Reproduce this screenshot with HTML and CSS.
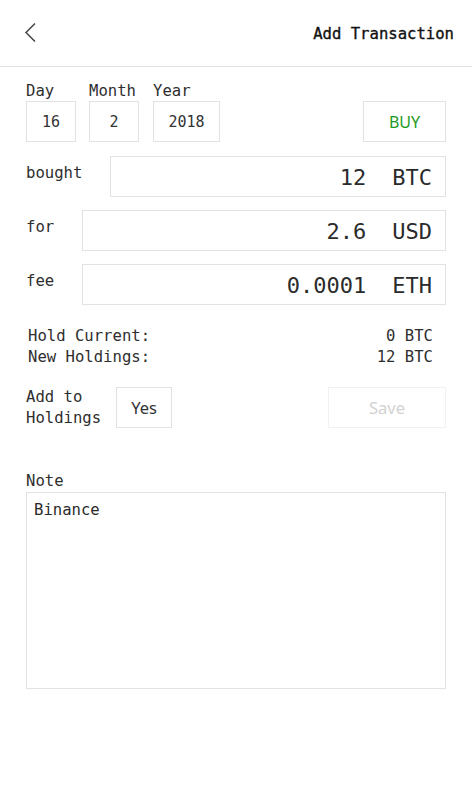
FILE: index.html
```html
<!DOCTYPE html>
<html>
<head>
<meta charset="utf-8">
<link rel="stylesheet" href="styles.css">
</head>
<body>
<div class="app">
  <header class="topbar">
    <svg class="back" width="14" height="22" viewBox="0 0 14 22"><path d="M11 1.5 L2 10.5 L11 19.5" fill="none" stroke="#444" stroke-width="1.5"/></svg>
    <div class="title">Add Transaction</div>
  </header>
  <main class="form">
    <div class="date-row">
      <div class="date-col">
        <div class="lbl">Day</div>
        <div class="box box-day">16</div>
      </div>
      <div class="date-col">
        <div class="lbl">Month</div>
        <div class="box box-day">2</div>
      </div>
      <div class="date-col year-col">
        <div class="lbl">Year</div>
        <div class="box box-year">2018</div>
      </div>
      <div class="box buy">BUY</div>
    </div>

    <div class="field first">
      <div class="flbl">bought</div>
      <div class="finput"><span class="val">12</span><span class="unit">BTC</span></div>
    </div>
    <div class="field">
      <div class="flbl">for</div>
      <div class="finput"><span class="val">2.6</span><span class="unit">USD</span></div>
    </div>
    <div class="field">
      <div class="flbl">fee</div>
      <div class="finput"><span class="val">0.0001</span><span class="unit">ETH</span></div>
    </div>

    <div class="summary">
      <div class="sline"><span>Hold Current:</span><span>0 BTC</span></div>
      <div class="sline"><span>New Holdings:</span><span>12 BTC</span></div>
    </div>

    <div class="add-row">
      <div class="add-lbl">Add to<br>Holdings</div>
      <div class="box yes">Yes</div>
      <div class="box save">Save</div>
    </div>

    <div class="lbl note-lbl">Note</div>
    <div class="note">Binance</div>
  </main>
</div>
</body>
</html>
```

FILE: styles.css
```css
* { box-sizing: border-box; }
html, body { margin: 0; padding: 0; background: #fff; }
body {
  font-family: "DejaVu Sans Mono", "Liberation Mono", monospace;
  color: #2a2a2a;
  width: 472px;
}
.topbar {
  height: 67px;
  border-bottom: 1px solid #e2e2e2;
  display: flex;
  align-items: center;
  justify-content: space-between;
  padding: 0 18px 0 24px;
}
.back { display: block; margin-top: -1px; }
.title {
  font-size: 15.6px;
  color: #111;
  -webkit-text-stroke: 0.35px #111;
  margin-top: 2px;
}
.form { padding: 15px 26px 0 26px; }
.lbl { font-size: 15.6px; line-height: 18px; margin-bottom: 1px; color: #2e2e2e; }
.date-row { display: flex; align-items: flex-end; gap: 13px; }
.date-col { display: flex; flex-direction: column; }
.year-col { margin-left: 1px; }
.box {
  height: 41px;
  border: 1px solid #e2e2e2;
  display: flex;
  align-items: center;
  justify-content: center;
}
.box-day { width: 50px; font-size: 15px; color: #333; }
.box-year { width: 67px; font-size: 15px; color: #333; }
.buy {
  margin-left: auto;
  width: 83px;
  font-family: "Noto Sans", "Open Sans", sans-serif;
  font-size: 16px;
  color: #1f9a24;
}
.field { display: flex; align-items: flex-start; margin-top: 13px; }
.field.first { margin-top: 14px; }
.flbl { font-size: 15.6px; line-height: 18px; padding-top: 8px; margin-right: 27.5px; color: #2e2e2e; }
.finput {
  flex: 1;
  height: 41px;
  border: 1px solid #e2e2e2;
  display: flex;
  align-items: center;
  justify-content: flex-end;
  padding-right: 13px;
  font-size: 22px;
  color: #2b2b2b;
  padding-top: 2px;
}
.unit { margin-left: 26px; }
.summary { margin-top: 21px; padding-right: 13px; }
.sline {
  display: flex;
  justify-content: space-between;
  font-size: 15.6px;
  line-height: 21px;
  padding-left: 2px;
  color: #2e2e2e;
}
.add-row { display: flex; align-items: flex-start; margin-top: 19px; }
.add-lbl { font-size: 15.6px; line-height: 21px; color: #2e2e2e; }
.yes {
  margin-left: 15px;
  margin-top: 0;
  width: 56px;
  font-family: "Noto Sans", "Open Sans", sans-serif;
  font-size: 16.5px;
  color: #333;
}
.save {
  margin-left: auto;
  margin-top: 0;
  width: 118px;
  border-color: #f1f1f1;
  font-family: "Noto Sans", "Open Sans", sans-serif;
  font-size: 16.5px;
  color: #d2d2d2;
}
.note-lbl { margin-top: 43px; margin-bottom: 2px; }
.note {
  height: 197px;
  border: 1px solid #e2e2e2;
  padding: 7px 7px;
  font-size: 15.6px;
  line-height: 20px;
  color: #2a2a2a;
}
```
